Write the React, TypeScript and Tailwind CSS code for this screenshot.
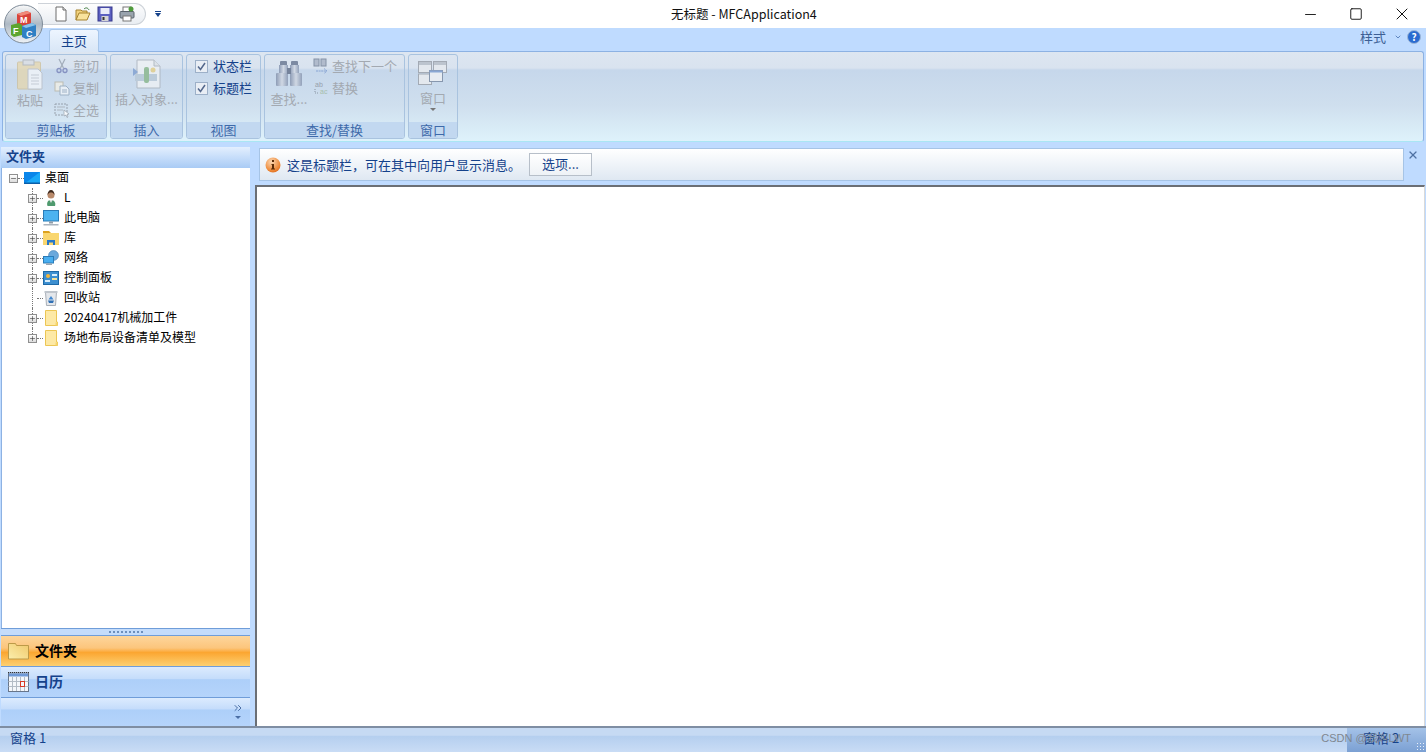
import type { ReactNode } from 'react'
import { ChevronDown, ChevronsRight, Minus, Plus, Square, X } from 'lucide-react'

const FONT = { fontFamily: '"Noto Sans CJK SC", "Liberation Sans", sans-serif' }

// ---- small drawn icons ----
function OrbIcon() {
    return (
        <svg viewBox="0 0 44 44" className="w-[44px] h-[44px]">
            <defs>
                <linearGradient id="orb" x1="0" y1="0" x2="0" y2="1">
                    <stop offset="0" stopColor="#fafafa" />
                    <stop offset="0.5" stopColor="#aeb9c4" />
                    <stop offset="1" stopColor="#eef2f6" />
                </linearGradient>
            </defs>
            <circle cx="21.5" cy="22" r="19" fill="url(#orb)" stroke="#7f8c99" />
            <path d="M15 12 l10 -3 l4 2 v11 l-10 3 l-4 -2z" fill="#d8433a" />
            <path d="M25 9 l4 2 l-10 3 l-4 -2z" fill="#f08a7a" />
            <path d="M9 23 l8 -2 l3 2 v10 l-8 2 l-3 -2z" fill="#5da52f" />
            <path d="M20 24 l10 -3 l4 2 v11 l-10 3 l-4 -2z" fill="#2f80c4" />
            <path d="M30 21 l4 2 l-10 3 l-4 -2z" fill="#8cc4ea" />
            <text x="18" y="21" fontSize="9" fontWeight="700" fill="#fff" fontFamily="Liberation Sans">M</text>
            <text x="11" y="32" fontSize="9" fontWeight="700" fill="#fff" fontFamily="Liberation Sans">F</text>
            <text x="24" y="35" fontSize="9" fontWeight="700" fill="#fff" fontFamily="Liberation Sans">C</text>
        </svg>
    )
}

function NewIcon() {
    return (
        <svg viewBox="0 0 16 16" className="w-4 h-4">
            <path d="M3 1h7l3 3v11H3z" fill="#fff" stroke="#6d6d6d" />
            <path d="M10 1v3h3" fill="#e4e4e4" stroke="#6d6d6d" />
        </svg>
    )
}

function OpenIcon() {
    return (
        <svg viewBox="0 0 16 16" className="w-4 h-4">
            <path d="M1 14V4h5l1 1h5v2" fill="#f2d27d" stroke="#a5822f" />
            <path d="M1 14l3-7h11l-3 7z" fill="#f9e39d" stroke="#a5822f" />
            <path d="M9 3c2-2 4-1 5 1" fill="none" stroke="#3d7a3d" />
        </svg>
    )
}

function SaveIcon() {
    return (
        <svg viewBox="0 0 16 16" className="w-4 h-4">
            <rect x="1" y="1" width="14" height="14" fill="#5b5fc0" stroke="#34378c" />
            <rect x="3.5" y="2" width="9" height="6" fill="#e9ebf8" />
            <rect x="4.5" y="10" width="7" height="5" fill="#d5d5d5" />
            <rect x="5.5" y="11" width="2" height="3" fill="#333" />
        </svg>
    )
}

function PrintIcon() {
    return (
        <svg viewBox="0 0 16 16" className="w-4 h-4">
            <rect x="4" y="1" width="8" height="5" fill="#fff" stroke="#777" />
            <rect x="1" y="5.5" width="14" height="6.5" rx="1" fill="#9aa4ae" stroke="#59636d" />
            <rect x="4" y="10" width="8" height="5" fill="#fff" stroke="#777" />
            <circle cx="12" cy="3" r="2.5" fill="#4f9b3b" />
        </svg>
    )
}

function PasteIcon() {
    return (
        <svg viewBox="0 0 26 31" className="w-[26px] h-[31px] opacity-75">
            <rect x="0.5" y="3" width="23" height="27" rx="1" fill="#e5d6ad" stroke="#cdbf98" />
            <rect x="6" y="1" width="11" height="5" fill="#d9dde2" stroke="#a9adb3" />
            <path d="M11 10h10l4 4v16H11z" fill="#f5f7fa" stroke="#b7bcc4" />
            <path d="M14 16h8M14 19h8M14 22h8M14 25h8" stroke="#c3c7cd" />
        </svg>
    )
}

function CutIcon() {
    return (
        <svg viewBox="0 0 16 16" className="w-4 h-4 opacity-70">
            <path d="M5 1l4.5 9M11 1L6.5 10" stroke="#8b95a3" strokeWidth="1.2" fill="none" />
            <circle cx="5" cy="12.5" r="2" fill="none" stroke="#6a74b0" strokeWidth="1.3" />
            <circle cx="11" cy="12.5" r="2" fill="none" stroke="#6a74b0" strokeWidth="1.3" />
        </svg>
    )
}

function CopyIcon() {
    return (
        <svg viewBox="0 0 16 16" className="w-4 h-4 opacity-70">
            <rect x="1" y="2" width="8" height="9" fill="#f6f2e5" stroke="#b7b09a" />
            <path d="M6 6h6l3 3v6H6z" fill="#f5f8fb" stroke="#8ba0b5" />
            <path d="M8 10h5M8 12h5" stroke="#8ba0b5" />
        </svg>
    )
}

function SelectAllIcon() {
    return (
        <svg viewBox="0 0 16 16" className="w-4 h-4 opacity-80">
            <rect x="1" y="2" width="12" height="11" fill="none" stroke="#8a929c" strokeDasharray="2 1" />
            <path d="M3 5h8M3 8h6" stroke="#a5acb5" />
            <path d="M10 8l5 4-2 .5 1 2.5-1 .5-1-2.5-2 1z" fill="#fff" stroke="#8a929c" strokeWidth="0.7" />
        </svg>
    )
}

function InsertObjectIcon() {
    return (
        <svg viewBox="0 0 30 30" className="w-[30px] h-[30px] opacity-80">
            <path d="M5 1h17l6 6v22H5z" fill="#eef1f4" stroke="#aab2bb" />
            <path d="M22 1v6h6" fill="#dde2e7" stroke="#aab2bb" />
            <path d="M1 9l5 4-5 4z" fill="#7f9fd0" />
            <rect x="3" y="15" width="22" height="7" fill="#b8c8d6" />
            <rect x="12" y="8" width="5" height="16" rx="2" fill="#8ab78a" />
            <circle cx="21" cy="11" r="2.5" fill="#e5cf86" />
        </svg>
    )
}

function BinocularsIcon() {
    return (
        <svg viewBox="0 0 28 25" className="w-[28px] h-[25px]">
            <defs>
                <linearGradient id="bino" x1="0" y1="0" x2="1" y2="0">
                    <stop offset="0" stopColor="#8d9cb6" />
                    <stop offset="0.5" stopColor="#d0d8e4" />
                    <stop offset="1" stopColor="#92a1ba" />
                </linearGradient>
            </defs>
            <rect x="5" y="0" width="7" height="5" rx="1" fill="#7c8aa2" />
            <rect x="16" y="0" width="7" height="5" rx="1" fill="#7c8aa2" />
            <rect x="4" y="4" width="9" height="8" fill="url(#bino)" />
            <rect x="15" y="4" width="9" height="8" fill="url(#bino)" />
            <rect x="1" y="12" width="12" height="13" rx="1" fill="url(#bino)" />
            <rect x="15" y="12" width="12" height="13" rx="1" fill="url(#bino)" />
            <rect x="12" y="7" width="4" height="6" fill="#75839b" />
        </svg>
    )
}

function FindNextIcon() {
    return (
        <svg viewBox="0 0 16 16" className="w-4 h-4 opacity-80">
            <rect x="1" y="1" width="5" height="7" fill="#a7b2c4" stroke="#707e95" />
            <rect x="8" y="1" width="5" height="7" fill="#a7b2c4" stroke="#707e95" />
            <path d="M3 13h10M11 10.5l3 2.5-3 2.5" fill="none" stroke="#7b9ad0" strokeDasharray="2 0.6" />
        </svg>
    )
}

function ReplaceIcon() {
    return (
        <svg viewBox="0 0 16 16" className="w-4 h-4 opacity-80">
            <text x="2" y="7" fontSize="7" fill="#8a929c" fontFamily="Liberation Sans">ab</text>
            <text x="7" y="14" fontSize="7" fill="#9db89d" fontFamily="Liberation Sans">ac</text>
            <path d="M2 9v4h3" fill="none" stroke="#7d8591" strokeDasharray="1 1" />
        </svg>
    )
}

function WindowsIcon() {
    return (
        <svg viewBox="0 0 30 24" className="w-[30px] h-[24px]">
            <rect x="0.5" y="0.5" width="13" height="11" fill="#e3e8ee" stroke="#a3aab4" />
            <rect x="1" y="1" width="12" height="3" fill="#bcc4ce" />
            <rect x="15.5" y="0.5" width="13" height="11" fill="#e3e8ee" stroke="#a3aab4" />
            <rect x="16" y="1" width="12" height="3" fill="#bcc4ce" />
            <rect x="0.5" y="13" width="13" height="10.5" fill="#e3e8ee" stroke="#a3aab4" />
            <rect x="11.5" y="9.5" width="13" height="11" fill="#e7ecf2" stroke="#8797ae" />
            <rect x="11.5" y="9.5" width="13" height="2" fill="#8aa7d4" />
        </svg>
    )
}

function CheckBox() {
    return (
        <span className="w-[13px] h-[13px] border border-[#9db0c8] bg-[#e9eef5] flex items-center justify-center">
            <svg viewBox="0 0 9 9" className="w-[9px] h-[9px]">
                <path d="M1 4.5l2.5 3L8 1" fill="none" stroke="#54688c" strokeWidth="1.5" />
            </svg>
        </span>
    )
}

function InfoIcon() {
    return (
        <svg viewBox="0 0 16 16" className="w-4 h-4">
            <defs>
                <radialGradient id="info" cx="0.4" cy="0.3" r="0.8">
                    <stop offset="0" stopColor="#fbd7b2" />
                    <stop offset="0.7" stopColor="#ee8a3a" />
                    <stop offset="1" stopColor="#d9651a" />
                </radialGradient>
            </defs>
            <circle cx="8" cy="8" r="7.5" fill="url(#info)" />
            <rect x="7" y="3" width="2" height="2" fill="#5c2c08" />
            <path d="M6.5 7H9v4.5h1V12.5H6V11.5h1V8H6.5z" fill="#5c2c08" />
        </svg>
    )
}

function HelpIcon() {
    return (
        <span className="w-[14px] h-[14px] rounded-full bg-[#2a6bd0] border border-[#9db7d8] text-white text-[10px] font-bold leading-none flex items-center justify-center">?</span>
    )
}

function DesktopIcon() {
    return (
        <svg viewBox="0 0 16 12" className="w-4 h-3">
            <rect width="16" height="12" fill="#0a86ea" />
            <path d="M0 12L16 0v12z" fill="#19a9f8" />
            <rect y="10.5" width="16" height="1.5" fill="#0b5ea8" />
        </svg>
    )
}

function UserIcon() {
    return (
        <svg viewBox="0 0 16 16" className="w-4 h-4">
            <path d="M4.5 16c-1-3 0-6 3.5-6s5 3 4 6z" fill="#4f9a6e" />
            <circle cx="8" cy="5" r="3.5" fill="#b98a6b" />
            <path d="M4.5 5c0-3 1.5-5 3.5-5s3.5 2 3.5 5c-1-2-2-2.5-3.5-2.5S5.5 3 4.5 5z" fill="#3d2a1e" />
            <path d="M6.5 10l1.5 3 1.5-3z" fill="#e6e6e6" />
        </svg>
    )
}

function PcIcon() {
    return (
        <svg viewBox="0 0 16 16" className="w-4 h-4">
            <rect x="0.5" y="0.5" width="15" height="10.5" fill="#4cb3f0" stroke="#2b7cb8" />
            <rect x="6" y="11.5" width="4" height="2" fill="#8f9ca8" />
            <rect x="0.5" y="14" width="15" height="1.5" fill="#aab4be" />
        </svg>
    )
}

function LibraryIcon() {
    return (
        <svg viewBox="0 0 16 16" className="w-4 h-4">
            <path d="M0 1h6l2 2H0z" fill="#dca21f" />
            <rect y="3" width="16" height="12" fill="#f9d66f" />
            <path d="M4 15v-5h8v5h-2v-2.5H6V15z" fill="#2878c8" />
        </svg>
    )
}

function NetworkIcon() {
    return (
        <svg viewBox="0 0 16 16" className="w-4 h-4">
            <circle cx="10.5" cy="5.5" r="5" fill="#6aa8dc" stroke="#3d76ad" strokeWidth="0.5" />
            <rect x="0.5" y="6.5" width="10" height="6.5" fill="#49aef0" stroke="#2b7cb8" />
            <rect x="3" y="13.5" width="6" height="1.5" fill="#9aa6b2" />
        </svg>
    )
}

function ControlPanelIcon() {
    return (
        <svg viewBox="0 0 16 14" className="w-4 h-[14px]">
            <rect x="0.5" y="0.5" width="15" height="13" fill="#3d8fd0" stroke="#1e6aa8" />
            <circle cx="5" cy="5" r="2" fill="#f3b53a" />
            <rect x="2" y="9" width="5" height="2" fill="#d9eefb" />
            <rect x="9" y="3" width="5" height="2" fill="#d9eefb" />
            <rect x="9" y="7" width="5" height="2" fill="#f5e39a" />
        </svg>
    )
}

function RecycleIcon() {
    return (
        <svg viewBox="0 0 16 16" className="w-4 h-4">
            <path d="M2.5 2h11l-1 13.5h-9z" fill="#e4e7eb" stroke="#a9afb7" />
            <rect x="1.5" y="1" width="13" height="2" fill="#bfc5cc" />
            <path d="M8 6l2.5 3.5h-5z" fill="#3f86cf" />
            <path d="M5 10.5h6l-1 2.5H6z" fill="#2f70b5" />
        </svg>
    )
}

function FileFolderIcon() {
    return (
        <svg viewBox="0 0 13 16" className="w-[13px] h-4">
            <path d="M.5.5h11v11.5h1v3.5H.5z" fill="#fde9a6" stroke="#ecc654" />
            <path d="M10.5 12.5h2v3h-2z" fill="#f5d56f" />
        </svg>
    )
}

function FolderBig() {
    return (
        <svg viewBox="0 0 21 18" className="w-[21px] h-[18px]">
            <defs>
                <linearGradient id="fold" x1="1" y1="0" x2="0" y2="1">
                    <stop offset="0" stopColor="#f0c96c" />
                    <stop offset="1" stopColor="#fbeeac" />
                </linearGradient>
            </defs>
            <path d="M.5 17V1.5h7l1 2h12V17z" fill="url(#fold)" stroke="#bd9a48" />
        </svg>
    )
}

function CalendarIcon() {
    return (
        <svg viewBox="0 0 21 20" className="w-[21px] h-[20px]">
            <rect x="0.5" y="1" width="20" height="18.5" fill="#f4f7fb" stroke="#67758a" />
            <path d="M0 .5h21" stroke="#333" strokeDasharray="1 1" />
            <rect x="1" y="1.5" width="19" height="3" fill="#6f9ad8" />
            <path d="M4.5 5v14M8.5 5v14M12.5 5v14M16.5 5v14M.5 9.5h20M.5 14.5h20" stroke="#b3bcc6" />
            <rect x="12.5" y="9.5" width="4" height="5" fill="none" stroke="#d83a26" />
        </svg>
    )
}

// ---- ribbon pieces ----
function Group({ label, width, children }: { label: string; width: string; children: ReactNode }) {
    return (
        <div className={`${width} h-[85px] flex flex-col rounded-[3px] border border-[#a9c3df] overflow-hidden`}>
            <div className="flex-1 flex min-h-0">{children}</div>
            <div className="h-[16px] shrink-0 bg-[#c2d8f0] text-[13px] leading-[15px] text-center text-[#3e6aaa]">{label}</div>
        </div>
    )
}

function SmallAction({ icon, label }: { icon: ReactNode; label: string }) {
    return (
        <div className="h-[22px] flex items-center gap-[3px] text-[13px] leading-none text-[#a3a9b1] whitespace-nowrap">
            {icon}
            <span className="-mt-[2px]">{label}</span>
        </div>
    )
}

function CheckAction({ label }: { label: string }) {
    return (
        <div className="h-[22px] flex items-center gap-[5px] text-[13px] leading-none text-[#15428b] whitespace-nowrap">
            <CheckBox />
            <span className="-mt-[2px]">{label}</span>
        </div>
    )
}

// ---- tree ----
const treeRows: { icon: ReactNode; label: string; leaf?: boolean }[] = [
    { icon: <UserIcon />, label: 'L' },
    { icon: <PcIcon />, label: '此电脑' },
    { icon: <LibraryIcon />, label: '库' },
    { icon: <NetworkIcon />, label: '网络' },
    { icon: <ControlPanelIcon />, label: '控制面板' },
    { icon: <RecycleIcon />, label: '回收站', leaf: true },
    { icon: <FileFolderIcon />, label: '20240417机械加工件' },
    { icon: <FileFolderIcon />, label: '场地布局设备清单及模型' },
]

function Expander({ open }: { open?: boolean }) {
    return (
        <span className="w-[9px] h-[9px] shrink-0 border border-[#8f8f8f] bg-gradient-to-b from-white to-[#dcdcdc] flex items-center justify-center text-[#333]">
            {open ? <Minus size={7} strokeWidth={2} /> : <Plus size={7} strokeWidth={2} />}
        </span>
    )
}

function TreeRow({ icon, label, leaf, last }: { icon: ReactNode; label: string; leaf?: boolean; last: boolean }) {
    return (
        <div className="h-5 flex items-center relative pl-[26px]">
            <span className={`absolute left-[30px] top-0 border-l border-dotted border-[#777] ${last ? 'h-[10px]' : 'h-5'}`} />
            <span className="w-[9px] relative z-10 flex justify-center">{leaf ? null : <Expander />}</span>
            <span className="w-[6px] border-t border-dotted border-[#777]" />
            <span className="w-4 flex justify-center">{icon}</span>
            <span className="ml-[5px] -mt-[2px] text-[12px] leading-none text-black whitespace-nowrap">{label}</span>
        </div>
    )
}

export default function App() {
    return (
        <div className="w-[1426px] h-[752px] overflow-hidden flex flex-col bg-[#bfdbff] relative" style={FONT}>
            {/* Title bar */}
            <div className="h-[28px] shrink-0 bg-white flex items-center pl-[38px] relative">
                <div className="h-[22px] w-[108px] -mt-[1px] rounded-r-[11px] border border-[#cdd2d8] border-l-0 bg-gradient-to-b from-[#fdfdfd] to-[#e9edf2] flex items-center gap-[6px] pl-[15px]">
                    <NewIcon />
                    <OpenIcon />
                    <SaveIcon />
                    <PrintIcon />
                </div>
                <div className="ml-[9px] flex flex-col items-center text-[#15428b]">
                    <span className="w-[6px] h-[1px] bg-[#15428b]" />
                    <span className="w-0 h-0 mt-[1px] border-l-[3px] border-r-[3px] border-t-[4px] border-l-transparent border-r-transparent border-t-[#15428b]" />
                </div>
                <div className="absolute left-[671px] top-[7px] text-[12.5px] leading-[14px] text-[#111] whitespace-nowrap">无标题 - MFCApplication4</div>
                <div className="ml-auto flex items-center text-[#111] pr-[1px]">
                    <span className="w-[46px] flex justify-center"><Minus size={17} strokeWidth={1.3} /></span>
                    <span className="w-[46px] flex justify-center"><Square size={14} strokeWidth={1.6} /></span>
                    <span className="w-[46px] flex justify-center"><X size={20} strokeWidth={1.2} /></span>
                </div>
            </div>

            {/* Tab strip */}
            <div className="h-[23px] shrink-0 flex items-end pl-[49px] pr-[4px] relative">
                <div className="w-[50px] h-[23px] rounded-t-[3px] border border-b-0 border-[#a7c6ea] bg-gradient-to-b from-[#edf5ff] to-[#d8e6f6] text-[13px] leading-[21px] text-center text-[#15428b] relative z-10 -mb-[1px]">
                    主页
                </div>
                <div className="ml-auto self-center -mt-[6px] flex items-center text-[#3d5f95] text-[13px] leading-none">
                    <span>样式</span>
                    <ChevronDown size={8} strokeWidth={3} className="ml-[8px] text-[#5f86c0]" />
                    <span className="ml-[5px] mr-[1px]"><HelpIcon /></span>
                </div>
            </div>

            {/* Ribbon */}
            <div className="mx-[2px] h-[91px] shrink-0 rounded-[3px] border border-[#8db2e3] border-b-[#a9e6f4] bg-[linear-gradient(#dde6f1_0,#d9e3ef_16px,#c6d7eb_18px,#cfdfee_60%,#def2fb_100%)] flex gap-[3px] pl-[2px] pt-[2px]">
                <Group label="剪贴板" width="w-[102px]">
                    <div className="w-[48px] flex flex-col items-center pt-[4px] text-[13px] text-[#a3a9b1]">
                        <PasteIcon />
                        <span className="mt-[2px] leading-[16px]">粘贴</span>
                    </div>
                    <div className="flex flex-col">
                        <SmallAction icon={<CutIcon />} label="剪切" />
                        <SmallAction icon={<CopyIcon />} label="复制" />
                        <SmallAction icon={<SelectAllIcon />} label="全选" />
                    </div>
                </Group>
                <Group label="插入" width="w-[73px]">
                    <div className="w-full flex flex-col items-center pt-[4px] text-[13px] text-[#a3a9b1] whitespace-nowrap">
                        <InsertObjectIcon />
                        <span className="mt-[2px] leading-[16px]">插入对象...</span>
                    </div>
                </Group>
                <Group label="视图" width="w-[75px]">
                    <div className="flex flex-col pl-[8px]">
                        <CheckAction label="状态栏" />
                        <CheckAction label="标题栏" />
                    </div>
                </Group>
                <Group label="查找/替换" width="w-[141px]">
                    <div className="w-[48px] flex flex-col items-center pt-[6px] text-[13px] text-[#a3a9b1] whitespace-nowrap">
                        <BinocularsIcon />
                        <span className="mt-[5px] leading-[16px]">查找...</span>
                    </div>
                    <div className="flex flex-col">
                        <SmallAction icon={<FindNextIcon />} label="查找下一个" />
                        <SmallAction icon={<ReplaceIcon />} label="替换" />
                    </div>
                </Group>
                <Group label="窗口" width="w-[50px]">
                    <div className="w-full flex flex-col items-center pt-[6px] text-[13px] text-[#a3a9b1]">
                        <WindowsIcon />
                        <span className="mt-[5px] leading-[16px]">窗口</span>
                        <span className="mt-[2px] w-0 h-0 border-l-[3px] border-r-[3px] border-t-[3px] border-l-transparent border-r-transparent border-t-[#777]" />
                    </div>
                </Group>
            </div>

            {/* Main */}
            <div className="flex-1 min-h-0 flex pt-[5px] bg-[#bfdbff]">
                {/* Left pane */}
                <div className="w-[249px] ml-[1px] shrink-0 flex flex-col">
                    <div className="h-[21px] shrink-0 bg-gradient-to-b from-[#e3effe] to-[#a9cbf5] pl-[5px] text-[13px] leading-[18px] font-bold text-[#15428b]">文件夹</div>
                    <div className="flex-1 min-h-0 bg-white border-l border-[#8db2e3]">
                        <div className="h-5 flex items-center pl-[7px]">
                            <Expander open />
                            <span className="w-[6px] border-t border-dotted border-[#777]" />
                            <DesktopIcon />
                            <span className="ml-[5px] -mt-[2px] text-[12px] leading-none text-black">桌面</span>
                        </div>
                        {treeRows.map((row, i) => (
                            <TreeRow key={row.label} {...row} last={i === treeRows.length - 1} />
                        ))}
                    </div>
                    <div className="h-[7px] shrink-0 border-t border-[#6f9dd9] bg-[#c4dcfb] flex items-center justify-center gap-[2px]">
                        {Array.from({ length: 9 }).map((_, i) => (
                            <span key={i} className="w-[2px] h-[2px] bg-[#6c8fbd]" />
                        ))}
                    </div>
                    <div className="h-[32px] shrink-0 border-y border-[#6f9dd9] bg-[linear-gradient(#fdd69c_0,#fcc57c_40%,#fba631_55%,#fdd071_100%)] flex items-center pl-[7px] gap-[6px] text-[14px] font-bold text-black">
                        <FolderBig />
                        <span className="-mt-[2px]">文件夹</span>
                    </div>
                    <div className="h-[31px] shrink-0 border-b border-[#6f9dd9] bg-[linear-gradient(#dcebfe_0,#c4dcfb_40%,#adcff9_42%,#b5d4fb_100%)] flex items-center pl-[7px] gap-[6px] text-[14px] font-bold text-[#15428b]">
                        <CalendarIcon />
                        <span className="-mt-[2px]">日历</span>
                    </div>
                    <div className="h-[28px] shrink-0 bg-[linear-gradient(#dcebfe_0,#c4dcfb_40%,#adcff9_42%,#b5d4fb_100%)] flex flex-col items-end pr-[6px] pt-[4px] text-[#4a6ea5]">
                        <ChevronsRight size={12} strokeWidth={2} />
                        <span className="mt-[2px] mr-[3px] w-0 h-0 border-l-[3px] border-r-[3px] border-t-[3px] border-l-transparent border-r-transparent border-t-[#4a6ea5]" />
                    </div>
                </div>

                {/* Right side */}
                <div className="flex-1 min-w-0 flex flex-col pl-[5px] pr-[1px]">
                    <div className="h-[33px] shrink-0 flex items-start">
                        <div className="ml-[4px] mt-[1px] w-[1145px] h-[33px] border border-[#a6c4e6] bg-gradient-to-b from-white to-[#dfe8f2] flex items-center pl-[5px]">
                            <InfoIcon />
                            <span className="ml-[6px] text-[13px] leading-none text-[#15428b]">这是标题栏，可在其中向用户显示消息。</span>
                            <span className="ml-[8px] w-[63px] h-[23px] border border-[#b7bfc9] bg-gradient-to-b from-white to-[#eef2f6] text-[13px] leading-[20px] text-center text-[#15428b]">选项...</span>
                        </div>
                        <X size={12} strokeWidth={2.4} className="ml-[3px] mt-[2px] text-[#4f71a3]" />
                    </div>
                    <div className="flex-1 min-h-0 mt-[5px] bg-white border-l-2 border-t-2 border-[#6b6f75] border-r border-r-[#d9d9d9]" />
                </div>
            </div>

            {/* Status bar */}
            <div className="h-[26px] shrink-0 border-t-2 border-[#7f8ea3] flex bg-[linear-gradient(#c6daf3_0,#c6daf3_30%,#b5cfef_35%,#c9dcf5_100%)]">
                <div className="flex-1 pl-[10px] text-[13px] leading-[20px] text-[#15428b]">窗格 1</div>
                <div className="w-[79px] bg-gradient-to-b from-[#a4c2e8] to-[#7ba0d3] pl-[16px] text-[13px] leading-[20px] text-[#15428b] relative">
                    窗格 2
                    <span className="absolute right-[2px] bottom-[2px] w-[8px] h-[8px] bg-[radial-gradient(#e8f0fa_35%,transparent_40%)] bg-[length:3px_3px]" />
                </div>
            </div>

            {/* Application orb */}
            <div className="absolute left-[2px] top-[2px]"><OrbIcon /></div>

            {/* Watermark */}
            <div className="absolute right-[15px] bottom-[8px] text-[11px] leading-none text-[#7f8790] whitespace-nowrap" style={{ fontFamily: '"Liberation Sans", sans-serif' }}>CSDN @我叫LWT</div>
        </div>
    )
}
